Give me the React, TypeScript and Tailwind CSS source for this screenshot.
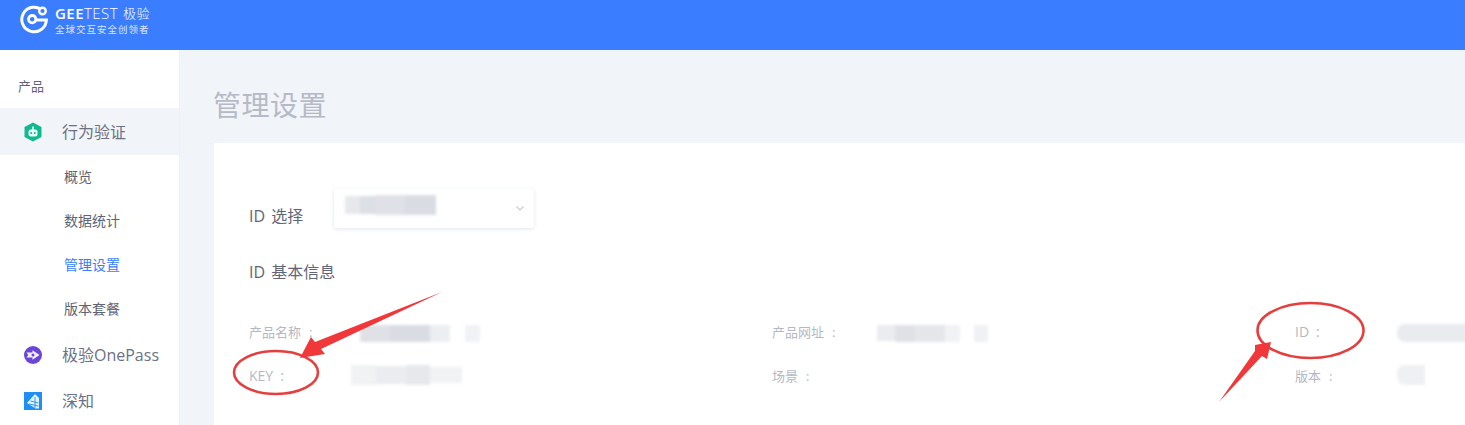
import React from "react";

const font = { fontFamily: '"Open Sans","Noto Sans CJK SC",sans-serif' };

function Logo() {
  return (
    <svg width="30" height="30" viewBox="0 0 30 30" fill="none" className="shrink-0">
      <path d="M23.500 6.500A12.300 12.300 0 1 0 27.400 16H17.500" stroke="#fff" strokeWidth="3" />
      <circle cx="13.200" cy="15.200" r="3.700" stroke="#fff" strokeWidth="2.800" />
      <circle cx="23.500" cy="7" r="3.300" fill="#3a7dff" stroke="#fff" strokeWidth="2.400" />
    </svg>
  );
}

function Blur({ blocks, className }: { blocks: [number, number, string][]; className: string }) {
  return (
    <div className={"flex items-center blur-[1.5px] " + className}>
      {blocks.map(([w, h, c], i) => (
        <div key={i} style={{ width: w, height: h, background: c }} />
      ))}
    </div>
  );
}

function Field({ label, colon = 8, latin = false, children }: { label: string; colon?: number; latin?: boolean; children?: React.ReactNode }) {
  return (
    <div className="flex h-[44px] items-center">
      <div className={"w-[102px] shrink-0 text-[#b4b8c4] " + (latin ? "pb-[3px] text-[14px]" : "text-[13px]")}>
        {label}
        <span style={{ marginLeft: colon }}>:</span>
      </div>
      {children}
    </div>
  );
}

export default function App() {
  return (
    <div className="relative flex h-[425px] w-[1465px] flex-col overflow-hidden bg-[#f1f4f9]" style={font}>
      <header className="flex h-[50px] shrink-0 items-start bg-[#3a7dff] pl-[19px] pt-[4px] text-white">
        <Logo />
        <div className="ml-[6px] flex flex-col">
          <div className="flex h-[19px] items-center text-[15px] tracking-[0.45px]">
            <span className="font-semibold">GEE</span>
            <span className="font-light">TEST</span>
            <span className="ml-[5px] text-[13px] font-light">极验</span>
          </div>
          <div className="mt-[1px] text-[9.500px] leading-[12px] tracking-[1px] text-[#dbe7ff]">全球交互安全创领者</div>
        </div>
      </header>
      <div className="flex min-h-0 flex-1">
        <aside className="w-[180px] shrink-0 border-r border-[#eef1f6] bg-white text-[#6b7285]">
          <div className="flex h-[58px] items-center pl-[18px] pt-[16px] text-[13px] text-[#5e6474]">产品</div>
          <div className="flex h-[47px] items-center bg-[#f1f4f9] pl-[24px] text-[16px]">
            <svg width="18" height="20" viewBox="0 0 18 20" className="mr-[20px] shrink-0">
              <path d="M9 .5 17.500 5v10L9 19.500.5 15V5z" fill="#12b88f" />
              <rect x="4.500" y="7.500" width="9" height="7" rx="2.500" fill="#e8fff8" />
              <path d="M9 4.500V8" stroke="#e8fff8" strokeWidth="1.600" />
              <circle cx="7.200" cy="11" r="1" fill="#12b88f" />
              <circle cx="10.800" cy="11" r="1" fill="#12b88f" />
            </svg>
            行为验证
          </div>
          <div className="flex flex-col text-[14px]">
            {["概览", "数据统计", "管理设置", "版本套餐"].map((t) => (
              <div key={t} className={"flex h-[44px] items-center pb-[2px] pl-[64px] " + (t === "管理设置" ? "text-[#3a7dff]" : "text-[#5e6474]")}>
                {t}
              </div>
            ))}
          </div>
          <div className="flex h-[46px] items-center pl-[24px] pt-[2px] text-[16px]">
            <svg width="18" height="18" viewBox="0 0 18 18" className="mr-[20px] shrink-0">
              <circle cx="9" cy="9" r="9" fill="#6a46d8" />
              <path d="M2.500 6.500h6V4.200L15.500 9l-7 4.800v-2.300h-6l1.800-2.500z" fill="#f3efff" />
              <circle cx="9" cy="9" r="1.500" fill="#6a46d8" />
            </svg>
            极验OnePass
          </div>
          <div className="flex h-[46px] items-center pl-[24px] pt-[2px] text-[16px]">
            <svg width="18" height="18" viewBox="0 0 18 18" className="mr-[20px] shrink-0">
              <rect width="18" height="18" fill="#1f8ff2" />
              <path d="M11 2 3 11l8.500 5.500H15V6z" fill="#e3f3ff" />
              <path d="M11 5v11M6.500 9l8 2M5 12l9.500 2" stroke="#1f8ff2" strokeWidth=".9" />
            </svg>
            深知
          </div>
        </aside>
        <main className="min-w-0 flex-1 pl-[34px]">
          <h1 className="-ml-[1px] flex h-[93px] items-center pt-[16px] text-[28px] font-normal tracking-[0.5px] text-[#b5bac6]">管理设置</h1>
          <section className="h-[300px] bg-white pl-[35px] pt-[45px] text-[#5f6679] [word-spacing:2px]">
            <div className="flex h-[40px] items-center text-[16px]">
              <span className="w-[85px] pt-[16px]">ID 选择</span>
              <div className="relative flex h-[39px] w-[200px] items-center justify-end rounded-[3px] bg-white pr-[8px] shadow-[0_1px_4px_rgba(90,110,150,0.18)]">
                <Blur
                  className="absolute left-[11px] top-[6px]"
                  blocks={[[15, 18, "#e6e8ec"], [15, 18, "#dcdfe5"], [30, 20, "#dfe1e7"], [31, 20, "#d9dce3"]]}
                />
                <svg width="12" height="12" viewBox="0 0 12 12" fill="none" stroke="#c6cad3" strokeWidth="1.200">
                  <path d="M2.500 4.500 6 8l3.500-3.500" />
                </svg>
              </div>
            </div>
            <div className="mt-[34px] flex h-[20px] items-center text-[16px]">ID 基本信息</div>
            <div className="mt-[29px] grid grid-cols-[523px_523px_1fr] items-start">
              <div>
                <Field label="产品名称">
                  <Blur className="ml-[9px]" blocks={[[30, 17, "#dfe1e6"], [40, 17, "#d9dce2"], [20, 17, "#eceef1"], [15, 0, "#fff"], [15, 17, "#f1f2f5"]]} />
                </Field>
                <Field label="KEY" colon={7} latin>
                  <Blur className="-mt-[4px]" blocks={[[25, 20, "#f1f2f4"], [30, 18, "#eaecef"], [24, 20, "#e6e8eb"], [32, 16, "#f1f2f4"]]} />
                </Field>
              </div>
              <div>
                <Field label="产品网址">
                  <Blur className="ml-[3px]" blocks={[[18, 16, "#eaecef"], [20, 17, "#dfe1e6"], [30, 17, "#e4e6ea"], [15, 17, "#f1f2f4"], [14, 0, "#fff"], [14, 17, "#f0f1f4"]]} />
                </Field>
                <Field label="场景" />
              </div>
              <div>
                <Field label="ID" colon={7} latin>
                  <div className="h-[18px] w-[70px] rounded-l-[8px] bg-[#e9ebee] blur-[1.5px]" />
                </Field>
                <Field label="版本">
                  <div className="-mt-[4px] h-[20px] w-[28px] rounded-l-[8px] bg-[#eff0f3] blur-[1.5px]" />
                </Field>
              </div>
            </div>
          </section>
        </main>
      </div>
      {/* hand-drawn annotations over the page */}
      <svg className="pointer-events-none absolute left-0 top-0" width="1465" height="425" viewBox="0 0 1465 425" fill="none">
        <ellipse cx="276" cy="372.500" rx="42" ry="21.500" stroke="#e53e3e" strokeWidth="2.600" />
        <ellipse cx="1310.500" cy="330.500" rx="53" ry="27.500" stroke="#e53e3e" strokeWidth="2.600" />
        <path d="M442 292 315 342 311 337 300 358 325 354 321 349z" fill="#f0383a" />
        <path d="M1219 402 1255 351 1255 345 1271 342 1267 359 1262 356z" fill="#f0383a" />
      </svg>
    </div>
  );
}
